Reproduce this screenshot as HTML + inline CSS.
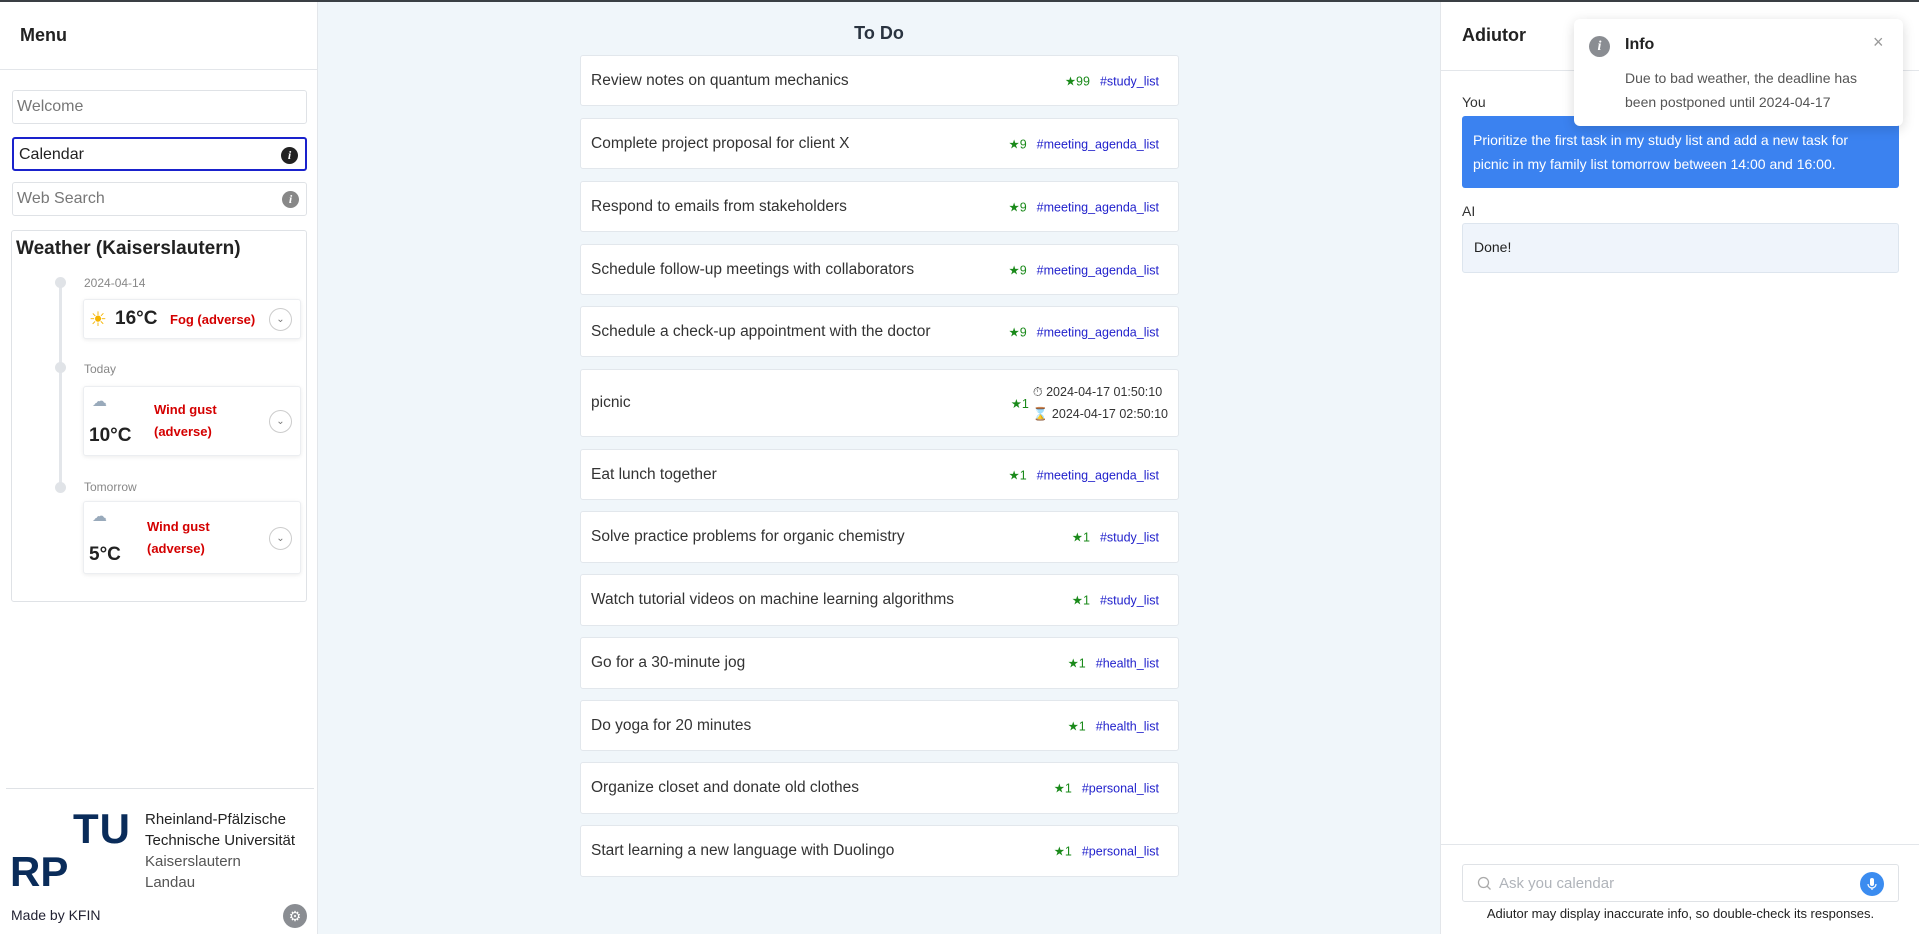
<!DOCTYPE html>
<html><head><meta charset="utf-8"><style>
*{box-sizing:border-box;margin:0;padding:0}
body{width:1919px;height:932px;overflow:hidden;font-family:"Liberation Sans",sans-serif;background:#fff;position:relative;color:#333;border-top:2px solid #3a3f44}
.abs{position:absolute}
#left{left:0;top:0;width:318px;height:932px;border-right:1px solid #e3e6ea;background:#fff}
#center{left:318px;top:0;width:1122px;height:932px;background:#f0f6fa}
#right{left:1440px;top:0;width:479px;height:932px;border-left:1px solid #e3e6ea;background:#fff}
.h{font-weight:bold;font-size:18px;color:#222}
.inp{position:absolute;left:12px;width:295px;height:34px;border:1px solid #dfe2e6;border-radius:3px;font-size:16px;color:#777;padding:7px 4px}
.ic{position:absolute;right:7px;top:8px;width:17px;height:17px;border-radius:50%;color:#fff;font:italic bold 12px "Liberation Serif",serif;text-align:center;line-height:17px}
.wc{position:absolute;left:83px;width:218px;background:#fff;border:1px solid #eceef1;border-radius:3px;box-shadow:0 1px 4px rgba(0,0,0,.08)}
.dot{position:absolute;left:55px;width:11px;height:11px;border-radius:50%;background:#e0e3e7}
.lbl{position:absolute;left:84px;font-size:12px;color:#888}
.chev{position:absolute;right:8px;width:23px;height:23px;border:1px solid #ccc;border-radius:50%;font-size:10px;text-align:center;line-height:21px;color:#777}
.red{color:#d40000;font-weight:bold;font-size:13px;line-height:22px}
.card{position:absolute;left:580px;width:599px;background:#fff;border:1px solid #e2e7ec;border-radius:3px;font-size:15.5px;color:#333}
.card .t{position:absolute;left:10px;top:50%;transform:translateY(-50%)}
.card .r{position:absolute;right:19px;top:50%;transform:translateY(-50%);font-size:12.5px}
.st{color:#1a8a1a}.tg{color:#2222cc;margin-left:10px}
</style></head><body>
<div id="left" class="abs">
 <div class="abs h" style="left:20px;top:23px">Menu</div>
 <div class="abs" style="left:0;top:67px;width:317px;border-top:1px solid #e3e6ea"></div>
 <div class="inp" style="top:88px">Welcome</div>
 <div class="inp" style="top:135px;border:2px solid #1a22cc;color:#222;padding-left:5px">Calendar<span class="ic" style="background:#222">i</span></div>
 <div class="inp" style="top:180px">Web Search<span class="ic" style="background:#888">i</span></div>
 <div class="abs" style="left:11px;top:228px;width:296px;height:372px;border:1px solid #dfe2e6;border-radius:3px"></div>
 <div class="abs" style="left:16px;top:236px;font-weight:bold;font-size:19px;color:#222">Weather (Kaiserslautern)</div>
 <div class="abs" style="left:59px;top:282px;width:3px;height:205px;background:#e3e6ea"></div>
 <div class="dot" style="top:275px"></div><div class="dot" style="top:360px"></div><div class="dot" style="top:480px"></div>
 <div class="lbl" style="top:274px">2024-04-14</div>
 <div class="lbl" style="top:360px">Today</div>
 <div class="lbl" style="top:478px">Tomorrow</div>
 <div class="wc" style="top:297px;height:40px">
  <span class="abs" style="left:5px;top:7px;font-size:20px;color:#f5b400">☀</span>
  <span class="abs" style="left:31px;top:8px;font-weight:bold;font-size:19px;color:#222">16°C</span>
  <span class="abs red" style="left:86px;top:9px">Fog (adverse)</span>
  <span class="chev" style="top:8px">⌄</span></div>
 <div class="wc" style="top:384px;height:70px">
  <span class="abs" style="left:8px;top:5px;font-size:15px;color:#9ab">☁</span>
  <span class="abs" style="left:5px;top:38px;font-weight:bold;font-size:19px;color:#222">10°C</span>
  <span class="abs red" style="left:70px;top:12px">Wind gust<br>(adverse)</span>
  <span class="chev" style="top:23px">⌄</span></div>
 <div class="wc" style="top:499px;height:73px">
  <span class="abs" style="left:8px;top:5px;font-size:15px;color:#9ab">☁</span>
  <span class="abs" style="left:5px;top:42px;font-weight:bold;font-size:19px;color:#222">5°C</span>
  <span class="abs red" style="left:63px;top:14px">Wind gust<br>(adverse)</span>
  <span class="chev" style="top:25px">⌄</span></div>
 <div class="abs" style="left:6px;top:786px;width:308px;border-top:1px solid #dfe2e6"></div>
 <div class="abs" style="left:73px;top:806px;font-weight:900;font-size:42px;color:#0a2c5a;letter-spacing:1px;line-height:42px">TU</div>
 <div class="abs" style="left:10px;top:850px;font-weight:900;font-size:42px;color:#0a2c5a;letter-spacing:0px;line-height:40px">RP</div>
 <div class="abs" style="left:145px;top:807px;font-size:15px;line-height:21px;color:#222">Rheinland-Pfälzische<br>Technische Universität<br><span style="color:#555">Kaiserslautern<br>Landau</span></div>
 <div class="abs" style="left:11px;top:905px;font-size:14px;color:#223">Made by KFIN</div>
 <div class="abs" style="left:283px;top:902px;width:24px;height:24px;border-radius:50%;background:#8a8d92;color:#fff;text-align:center;line-height:24px;font-size:14px">⚙</div>
</div>
<div id="center" class="abs">
 <div class="abs h" style="left:0;width:1122px;text-align:center;top:21px;color:#2a3440">To Do</div>
</div>
<div class="card" style="top:53px;height:51px"><span class="t">Review notes on quantum mechanics</span><span class="r"><span class="st">★99</span><span class="tg">#study_list</span></span></div>
<div class="card" style="top:116px;height:51px"><span class="t">Complete project proposal for client X</span><span class="r"><span class="st">★9</span><span class="tg">#meeting_agenda_list</span></span></div>
<div class="card" style="top:179px;height:51px"><span class="t">Respond to emails from stakeholders</span><span class="r"><span class="st">★9</span><span class="tg">#meeting_agenda_list</span></span></div>
<div class="card" style="top:242px;height:51px"><span class="t">Schedule follow-up meetings with collaborators</span><span class="r"><span class="st">★9</span><span class="tg">#meeting_agenda_list</span></span></div>
<div class="card" style="top:304px;height:51px"><span class="t">Schedule a check-up appointment with the doctor</span><span class="r"><span class="st">★9</span><span class="tg">#meeting_agenda_list</span></span></div>
<div class="card" style="top:367px;height:68px"><span class="t">picnic</span><span class="r" style="right:10px;display:flex;align-items:center"><span class="st">★1</span><span style="margin-left:4px;line-height:22px;color:#333">⏱ 2024-04-17 01:50:10<br><span style="color:#d9a400">⌛</span> 2024-04-17 02:50:10</span></span></div>
<div class="card" style="top:447px;height:51px"><span class="t">Eat lunch together</span><span class="r"><span class="st">★1</span><span class="tg">#meeting_agenda_list</span></span></div>
<div class="card" style="top:509px;height:52px"><span class="t">Solve practice problems for organic chemistry</span><span class="r"><span class="st">★1</span><span class="tg">#study_list</span></span></div>
<div class="card" style="top:572px;height:52px"><span class="t">Watch tutorial videos on machine learning algorithms</span><span class="r"><span class="st">★1</span><span class="tg">#study_list</span></span></div>
<div class="card" style="top:635px;height:52px"><span class="t">Go for a 30-minute jog</span><span class="r"><span class="st">★1</span><span class="tg">#health_list</span></span></div>
<div class="card" style="top:698px;height:51px"><span class="t">Do yoga for 20 minutes</span><span class="r"><span class="st">★1</span><span class="tg">#health_list</span></span></div>
<div class="card" style="top:760px;height:52px"><span class="t">Organize closet and donate old clothes</span><span class="r"><span class="st">★1</span><span class="tg">#personal_list</span></span></div>
<div class="card" style="top:823px;height:52px"><span class="t">Start learning a new language with Duolingo</span><span class="r"><span class="st">★1</span><span class="tg">#personal_list</span></span></div>
<div id="right" class="abs">
 <div class="abs h" style="left:21px;top:23px">Adiutor</div>
 <div class="abs" style="left:0;top:68px;width:479px;border-top:1px solid #e3e6ea"></div>
 <div class="abs" style="left:21px;top:92px;font-size:14px;color:#333">You</div>
 <div class="abs" style="left:21px;top:114px;width:437px;height:72px;background:#3b82f0;border-radius:3px;color:#fff;font-size:14px;line-height:24px;padding:12px 16px 12px 11px">Prioritize the first task in my study list and add a new task for picnic in my family list tomorrow between 14:00 and 16:00.</div>
 <div class="abs" style="left:21px;top:201px;font-size:14px;color:#333">AI</div>
 <div class="abs" style="left:21px;top:221px;width:437px;height:50px;background:#eff4fb;border:1px solid #dde5ee;border-radius:3px;color:#222;font-size:14px;padding:15px 11px">Done!</div>
 <div class="abs" style="left:0;top:842px;width:479px;border-top:1px solid #e3e6ea"></div>
 <div class="abs" style="left:21px;top:862px;width:437px;height:38px;border:1px solid #dfe2e6;border-radius:3px">
  <svg class="abs" style="left:14px;top:11px" width="15" height="15" viewBox="0 0 15 15"><circle cx="6.5" cy="6.5" r="5" fill="none" stroke="#aaa" stroke-width="1.3"/><path d="M10 10l3.5 3.5" stroke="#aaa" stroke-width="1.3"/></svg>
  <span class="abs" style="left:36px;top:10px;font-size:15px;color:#b0b4ba">Ask you calendar</span>
  <div class="abs" style="left:397px;top:7px;width:24px;height:24px;border-radius:50%;background:#3b8cf0"><svg width="24" height="24" viewBox="0 0 24 24"><rect x="10" y="6" width="4" height="8" rx="2" fill="#fff"/><path d="M8 12a4 4 0 0 0 8 0M12 16v2" stroke="#fff" stroke-width="1.2" fill="none"/></svg></div>
 </div>
 <div class="abs" style="left:0;width:479px;text-align:center;top:904px;font-size:13px;color:#222">Adiutor may display inaccurate info, so double-check its responses.</div>
</div>
<div class="abs" style="left:1574px;top:17px;width:329px;height:107px;background:#fff;border-radius:6px;box-shadow:0 3px 12px rgba(0,0,0,.15)">
 <div class="abs" style="left:15px;top:17px;width:21px;height:21px;border-radius:50%;background:#8a8d92;color:#fff;font:italic bold 14px 'Liberation Serif',serif;text-align:center;line-height:21px">i</div>
 <div class="abs" style="left:51px;top:17px;font-weight:bold;font-size:16px;color:#222">Info</div>
 <div class="abs" style="left:299px;top:13px;font-size:18px;color:#999">×</div>
 <div class="abs" style="left:51px;top:47px;font-size:14px;line-height:24px;color:#555">Due to bad weather, the deadline has<br>been postponed until 2024-04-17</div>
</div>
</body></html>
